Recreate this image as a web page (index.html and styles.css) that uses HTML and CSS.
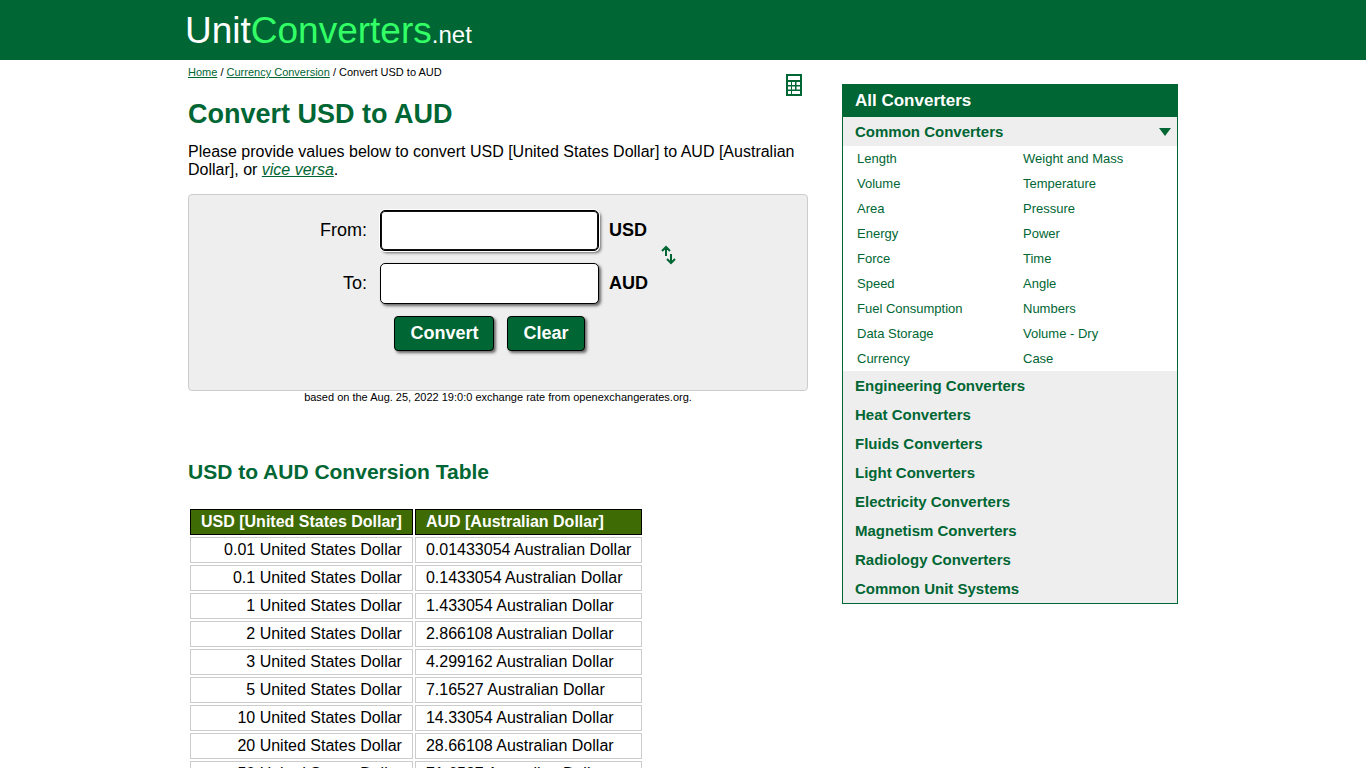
FILE: index.html
```html
<!DOCTYPE html>
<html lang="en">
<head>
<meta charset="utf-8">
<meta name="viewport" content="width=device-width, initial-scale=1">
<title>Convert USD to AUD</title>
<link rel="stylesheet" href="styles.css">
</head>
<body>
<header class="site-header">
  <div class="wrap"><a class="logo" href="#">Unit<span class="logo-accent">Converters</span><span class="logo-tld">.net</span></a></div>
</header>
<div class="wrap layout">
  <main class="main">
    <div class="topline">
      <nav class="crumbs" aria-label="Breadcrumb"><a href="#">Home</a> / <a href="#">Currency Conversion</a> / Convert USD to AUD</nav>
      <a class="calc-link" href="#" aria-label="Calculator">
        <svg class="calc-icon" width="16" height="22" viewBox="0 0 16 22" aria-hidden="true">
          <path fill="#006633" fill-rule="evenodd" d="M0 0h16v22H0zM2 2v4h12V2zM2 8v3h3V8zM6 8v3h3V8zM10.500 8v3h3.500V8zM2 12.500v3h3v-3zM6 12.500v3h3v-3zM10.500 12.500v3h3.500v-3zM2 17v3h3v-3zM6 17v3h8v-3z"/>
        </svg>
      </a>
    </div>
    <h1 class="title">Convert USD to AUD</h1>
    <p class="intro">Please provide values below to convert USD [United States Dollar] to AUD [Australian Dollar], or <a class="reverse" href="#">vice versa</a>.</p>
    <form class="panel">
      <label class="label" for="from">From:</label>
      <input class="field field-active" id="from" type="text">
      <span class="unit">USD</span>
      <button class="swap" type="button" aria-label="Swap units">
        <svg class="swap-icon" width="16" height="20" viewBox="0 0 16 20" fill="none" stroke="#006633" stroke-width="2" aria-hidden="true">
          <path d="M5 11V2M1 6l4-4 4 4M10 9v9M6 14l4 4 4-4"/>
        </svg>
      </button>
      <label class="label" for="to">To:</label>
      <input class="field" id="to" type="text">
      <span class="unit">AUD</span>
      <div class="actions">
        <button class="btn" type="button">Convert</button>
        <button class="btn" type="reset">Clear</button>
      </div>
    </form>
    <p class="note">based on the Aug. 25, 2022 19:0:0 exchange rate from openexchangerates.org.</p>
    <h2 class="subtitle">USD to AUD Conversion Table</h2>
    <table class="rates">
      <thead><tr><th>USD [United States Dollar]</th><th>AUD [Australian Dollar]</th></tr></thead>
      <tbody>
        <tr><td>0.01 United States Dollar</td><td>0.01433054 Australian Dollar</td></tr>
        <tr><td>0.1 United States Dollar</td><td>0.1433054 Australian Dollar</td></tr>
        <tr><td>1 United States Dollar</td><td>1.433054 Australian Dollar</td></tr>
        <tr><td>2 United States Dollar</td><td>2.866108 Australian Dollar</td></tr>
        <tr><td>3 United States Dollar</td><td>4.299162 Australian Dollar</td></tr>
        <tr><td>5 United States Dollar</td><td>7.16527 Australian Dollar</td></tr>
        <tr><td>10 United States Dollar</td><td>14.33054 Australian Dollar</td></tr>
        <tr><td>20 United States Dollar</td><td>28.66108 Australian Dollar</td></tr>
        <tr><td>50 United States Dollar</td><td>71.6527 Australian Dollar</td></tr>
      </tbody>
    </table>
  </main>
  <aside class="side">
    <div class="side-title">All Converters</div>
    <a class="group group-open" href="#">Common Converters
      <svg class="arrow" width="12" height="8" viewBox="0 0 12 8" aria-hidden="true"><path d="M0 0h12L6 8z" fill="#006633"/></svg>
    </a>
    <div class="links">
      <a href="#">Length</a><a href="#">Weight and Mass</a>
      <a href="#">Volume</a><a href="#">Temperature</a>
      <a href="#">Area</a><a href="#">Pressure</a>
      <a href="#">Energy</a><a href="#">Power</a>
      <a href="#">Force</a><a href="#">Time</a>
      <a href="#">Speed</a><a href="#">Angle</a>
      <a href="#">Fuel Consumption</a><a href="#">Numbers</a>
      <a href="#">Data Storage</a><a href="#">Volume - Dry</a>
      <a href="#">Currency</a><a href="#">Case</a>
    </div>
    <a class="group" href="#">Engineering Converters</a>
    <a class="group" href="#">Heat Converters</a>
    <a class="group" href="#">Fluids Converters</a>
    <a class="group" href="#">Light Converters</a>
    <a class="group" href="#">Electricity Converters</a>
    <a class="group" href="#">Magnetism Converters</a>
    <a class="group" href="#">Radiology Converters</a>
    <a class="group" href="#">Common Unit Systems</a>
  </aside>
</div>
</body>
</html>
```
FILE: styles.css
```css
* { box-sizing: border-box; }
html { scrollbar-width: none; }
body {
  margin: 0;
  background: #fff;
  color: #000;
  font: 16px/18px Arial, "Liberation Sans", sans-serif;
}
a { color: #006633; }
.wrap { max-width: 990px; margin: 0 auto; }

.site-header { background: #006633; }
.logo {
  display: block;
  padding: 9px 0 7px;
  margin-left: -3px;
  font-size: 37px;
  line-height: 44px;
  color: #fff;
  text-decoration: none;
}
.logo-accent { color: #33ff66; }
.logo-tld { font-size: 24px; line-height: 24px; }

.layout { display: flex; align-items: flex-start; gap: 34px; }
.main { flex: 1; min-width: 0; }
.topline { display: flex; justify-content: space-between; align-items: flex-start; }
.crumbs { padding-top: 5px; font-size: 11px; line-height: 14px; }
.calc-link { padding: 14px 6px 0 0; }
.calc-icon { display: block; }
.title { margin: 2px 0 13px; font-size: 27px; line-height: 32px; color: #006633; }
.intro { margin: 0 0 15px; }
.reverse { font-style: italic; }

.panel {
  display: grid;
  grid-template-columns: 181px 219px 42px 16px;
  gap: 12px 10px;
  align-items: center;
  padding: 15px 0 39px;
  border: 1px solid #ccc;
  border-radius: 4px;
  background: #eee;
  font-size: 18px;
  line-height: 22px;
}
.label { padding: 0 3px 2px 0; text-align: right; }
.field {
  width: 100%;
  height: 41px;
  padding: 4px 8px;
  border: 1px solid #000;
  border-radius: 5px;
  background: #fff;
  box-shadow: 2px 2px 3px #666;
  font: inherit;
}
.field-active {
  box-shadow: inset 0 0 0 1px #101010, 0 0 0 1px #fff, 2px 2px 3px #666;
}
.unit { padding-bottom: 2px; font-weight: bold; }
.swap {
  grid-column: 4;
  grid-row: 1 / 3;
  padding: 0 0 4px;
  border: 0;
  background: none;
}
.swap-icon { display: block; }
.actions { grid-column: 2; display: flex; justify-content: center; gap: 13px; }
.btn {
  padding: 5px 15px 6px;
  border: 1px solid #000;
  border-radius: 4px;
  background: #006633;
  box-shadow: 2px 2px 3px #666;
  color: #fff;
  font: bold 18px/22px Arial, "Liberation Sans", sans-serif;
}
.note { margin: 0; font-size: 11px; line-height: 12px; text-align: center; }

.subtitle { margin: 57px 0 23px; font-size: 21px; line-height: 24px; color: #006633; }
.rates { border-spacing: 2px; }
.rates th { padding: 3px 10px; border: 1px solid #000; background: #3e6b04; color: #fff; text-align: left; }
.rates td { padding: 3px 10px; border: 1px solid #ccc; }
.rates td:first-child { text-align: right; }

.side { width: 336px; margin-top: 24px; border: 1px solid #006633; background: #eee; }
.side-title { padding: 6px 12px; background: #006633; color: #fff; font-size: 17px; line-height: 20px; font-weight: bold; }
.group {
  display: block;
  padding: 6px 12px 5px;
  font-size: 15px;
  line-height: 18px;
  font-weight: bold;
  text-decoration: none;
}
.group-open { display: flex; justify-content: space-between; align-items: center; padding-right: 6px; }
.links { display: grid; grid-template-columns: 1fr 1fr; padding-left: 2px; background: #fff; font-size: 13px; }
.links a { padding: 4px 12px 3px; text-decoration: none; }
```
